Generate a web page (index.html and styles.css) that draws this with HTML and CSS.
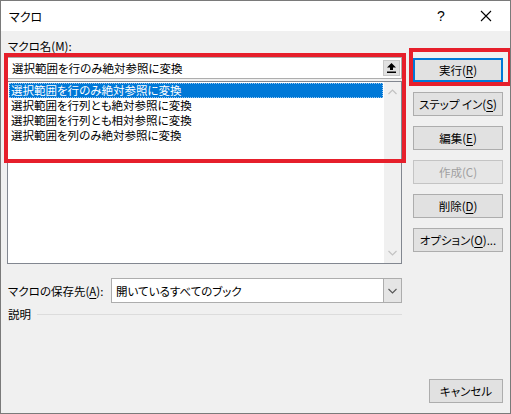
FILE: index.html
```html
<!DOCTYPE html>
<html lang="ja">
<head>
  <meta charset="UTF-8" />
  <title>マクロ</title>
  <link rel="stylesheet" href="styles.css">
</head>
<body>
  <!-- Macro dialog window -->
  <div class="window">
    <!-- Title bar with help and close -->
    <div class="titlebar">
      <span class="title">マクロ</span>
      <span class="help">?</span>
      <span class="close">
        <svg width="12" height="12" viewBox="0 0 12 12">
          <path d="M1 1 L11 11 M11 1 L1 11" stroke="#000" stroke-width="1.1" fill="none" />
        </svg>
      </span>
    </div>

    <div class="content">
      <div class="top">
        <!-- Macro name field and list -->
        <div class="names">
          <div class="label">マクロ名(<u>M</u>):</div>
          <div class="name-field">
            <span class="name-text">選択範囲を行のみ絶対参照に変換</span>
            <span class="up-btn">
              <svg width="9" height="10" viewBox="0 0 9 10">
                <path d="M4.5 0 L9 4.5 L6 4.5 L6 7 L3 7 L3 4.5 L0 4.5 Z" fill="#000" />
                <rect x="0" y="8.5" width="9" height="1.5" fill="#000" />
              </svg>
            </span>
          </div>
          <div class="listbox">
            <ul class="items">
              <li class="selected">選択範囲を行のみ絶対参照に変換</li>
              <li>選択範囲を行列とも絶対参照に変換</li>
              <li>選択範囲を行列とも相対参照に変換</li>
              <li>選択範囲を列のみ絶対参照に変換</li>
            </ul>
            <div class="scrollbar">
              <svg width="9" height="6" viewBox="0 0 9 6">
                <path d="M0.5 5 L4.5 1 L8.5 5" stroke="#c2c2c2" stroke-width="1.2" fill="none" />
              </svg>
              <svg width="9" height="6" viewBox="0 0 9 6">
                <path d="M0.5 1 L4.5 5 L8.5 1" stroke="#c2c2c2" stroke-width="1.2" fill="none" />
              </svg>
            </div>
          </div>
        </div>

        <!-- Command buttons -->
        <div class="actions">
          <button class="btn default">実行(<u>R</u>)</button>
          <button class="btn">ステップ イン(<u>S</u>)</button>
          <button class="btn">編集(<u>E</u>)</button>
          <button class="btn" disabled>作成(C)</button>
          <button class="btn">削除(<u>D</u>)</button>
          <button class="btn">オプション(<u>O</u>)...</button>
        </div>
      </div>

      <!-- Where macros are looked up -->
      <div class="storage">
        <span class="storage-label">マクロの保存先(<u>A</u>):</span>
        <div class="combo">
          <span class="combo-text">開いているすべてのブック</span>
          <span class="combo-btn">
            <svg width="9" height="6" viewBox="0 0 9 6">
              <path d="M0.5 1 L4.5 5 L8.5 1" stroke="#555" stroke-width="1.1" fill="none" />
            </svg>
          </span>
        </div>
      </div>

      <div class="desc">
        <span>説明</span>
        <span class="rule"></span>
      </div>

      <div class="footer">
        <button class="btn cancel">キャンセル</button>
      </div>
    </div>

    <!-- Red highlight frames -->
    <div class="mark mark-list"></div>
    <div class="mark mark-run"></div>
  </div>
</body>
</html>
```

FILE: styles.css
```css
/* Page reset */
body {
  margin: 0;
  background: #f0f0f0;
  font-family: "Noto Sans CJK JP", "Noto Sans", sans-serif;
  font-size: 11.5px;
  font-feature-settings: "palt";
  color: #000;
}

u {
  text-underline-offset: 2px;
}

/* Dialog frame */
.window {
  position: relative;
  width: 511px;
  height: 414px;
  box-sizing: border-box;
  border: 1px solid #7a7a7a;
  background: #f0f0f0;
  display: flex;
  flex-direction: column;
  overflow: hidden;
}

/* Title bar */
.titlebar {
  height: 30px;
  background: #fff;
  display: flex;
  align-items: center;
  flex-shrink: 0;
}

.title {
  padding-left: 8px;
  flex: 1;
  font-size: 12px;
}

.help {
  width: 20px;
  text-align: center;
  font-family: "Liberation Sans", sans-serif;
  font-size: 14px;
  margin-right: 25px;
}

.close {
  width: 20px;
  display: flex;
  justify-content: center;
  margin-right: 14px;
}

/* Main area */
.content {
  flex: 1;
  display: flex;
  flex-direction: column;
}

.top {
  display: flex;
  padding-left: 6px;
}

.names {
  width: 395px;
}

.label {
  margin-top: 7px;
  height: 16px;
  line-height: 16px;
  padding-left: 1px;
}

/* Name edit box */
.name-field {
  margin-top: 3px;
  height: 22px;
  box-sizing: border-box;
  border: 1px solid #adadad;
  background: #fff;
  display: flex;
  align-items: center;
  padding-left: 4px;
}

.name-text {
  flex: 1;
}

.up-btn {
  width: 17px;
  height: 16px;
  margin-right: 1px;
  background: #e1e1e1;
  border: 1px solid #c8c8c8;
  box-sizing: border-box;
  display: flex;
  align-items: center;
  justify-content: center;
}

/* Macro list */
.listbox {
  margin-top: 2px;
  height: 183px;
  box-sizing: border-box;
  border: 1px solid #828790;
  background: #fff;
  display: flex;
}

.items {
  list-style: none;
  margin: 0;
  padding: 1px;
  flex: 1;
}

.items li {
  height: 15px;
  line-height: 15px;
  padding-left: 2px;
  white-space: nowrap;
  overflow: hidden;
}

.items li.selected {
  background: #0078d7;
  color: #fff;
  outline: 1px dotted #9cc8ee;
  outline-offset: -1px;
}

.scrollbar {
  width: 17px;
  background: #f0f0f0;
  display: flex;
  flex-direction: column;
  align-items: center;
  justify-content: space-between;
  padding: 7px 0;
}

/* Button column */
.actions {
  margin-left: 11px;
  width: 90px;
  padding-top: 27px;
  display: flex;
  flex-direction: column;
  gap: 10px;
}

.btn {
  height: 24px;
  box-sizing: border-box;
  background: #e1e1e1;
  border: 1px solid #adadad;
  font-family: inherit;
  font-size: 11.5px;
  font-feature-settings: "palt";
  color: #000;
  padding: 0;
}

.btn.default {
  border-color: #0078d7;
  box-shadow: inset 0 0 0 1px #0078d7;
}

.btn:disabled {
  background: #e6e6e6;
  border-color: #c4c4c4;
  color: #a0a0a0;
}

/* Storage location row */
.storage {
  margin-top: 14px;
  padding-left: 7px;
  display: flex;
  align-items: center;
}

.storage-label {
  width: 103px;
}

.combo {
  width: 291px;
  height: 25px;
  box-sizing: border-box;
  border: 1px solid #adadad;
  background: #fff;
  display: flex;
  align-items: center;
  padding-left: 4px;
}

.combo-text {
  flex: 1;
}

.combo-btn {
  width: 17px;
  height: 23px;
  background: #e5e5e5;
  border-left: 1px solid #adadad;
  display: flex;
  align-items: center;
  justify-content: center;
}

/* Description heading */
.desc {
  margin-top: 3px;
  margin-left: 6px;
  width: 395px;
  height: 16px;
  padding-left: 1px;
  box-sizing: border-box;
  display: flex;
  align-items: center;
}

.rule {
  flex: 1;
  height: 1px;
  background: #dcdcdc;
  margin-left: 6px;
}

/* Bottom row */
.footer {
  margin-top: auto;
  padding: 0 7px 10px 0;
  display: flex;
  justify-content: flex-end;
}

.cancel {
  width: 74px;
}

/* Highlight frames drawn over the dialog */
.mark {
  position: absolute;
  border: 4px solid #e61f2b;
  box-sizing: border-box;
}

.mark-list {
  left: 3px;
  top: 52px;
  width: 402px;
  height: 110px;
}

.mark-run {
  left: 408px;
  top: 47px;
  width: 103px;
  height: 38px;
}
```
